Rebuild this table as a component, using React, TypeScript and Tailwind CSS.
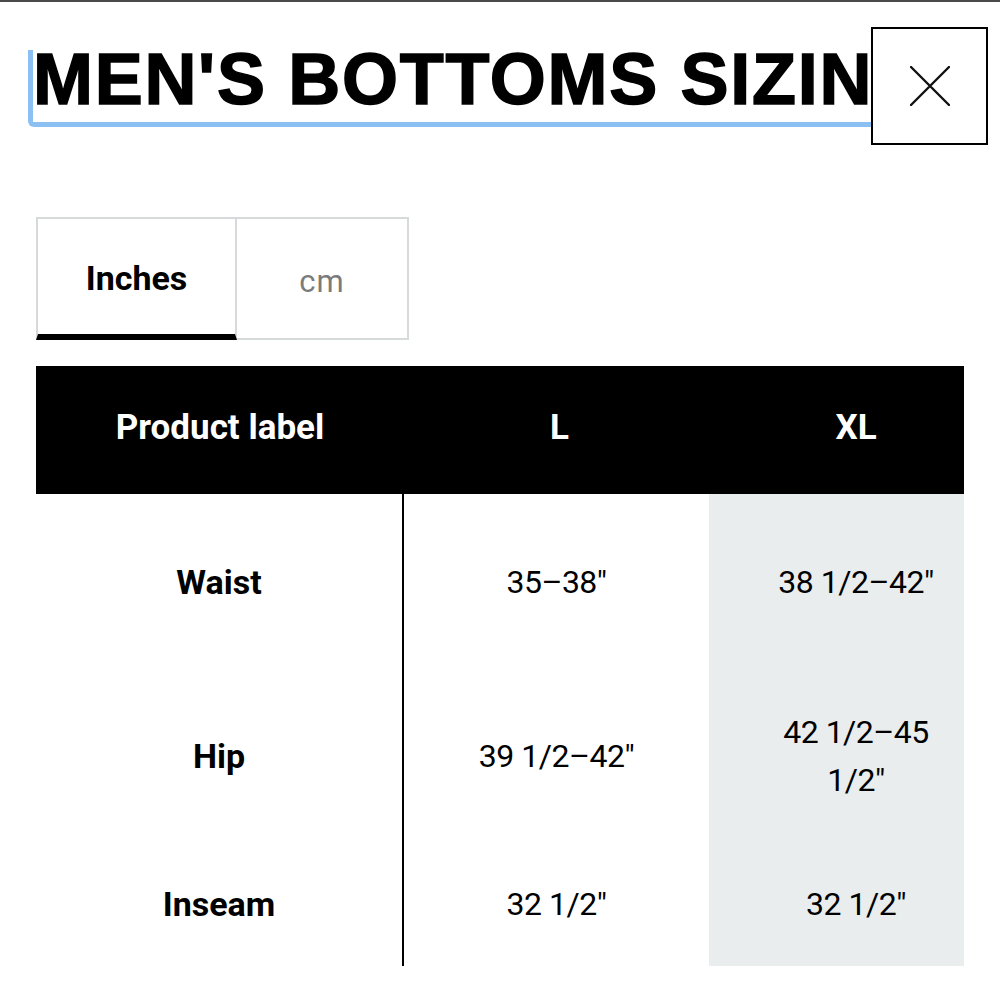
import React from "react";

const rows = [
  { label: "Waist", l: "35–38\"", xl: "38 1/2–42\"", h: "h-[176px]" },
  { label: "Hip", l: "39 1/2–42\"", xl: "42 1/2–45 1/2\"", h: "h-[172px]" },
  { label: "Inseam", l: "32 1/2\"", xl: "32 1/2\"", h: "h-[124px]" },
];

const CloseIcon = () => (
  <svg width="40" height="40" viewBox="0 0 40 40" fill="none">
    <path d="M1 1L39 39M39 1L1 39" stroke="#111" strokeWidth="2.4" strokeLinecap="round" />
  </svg>
);

const App = () => {
  return (
    <div className="w-[1000px] h-[1000px] bg-white border-t-2 border-[#4a4a4a] overflow-hidden font-['Roboto',sans-serif] text-black">
      {/* heading row */}
      <div className="flex items-start pl-[28px]">
        <div className="mt-[48px] w-[843px] overflow-hidden border-l-[5px] border-b-[5px] border-[#8dc0f2] rounded-bl-[6px] pb-[13px]">
          <h1 className="whitespace-nowrap font-['Liberation_Sans',Arial,sans-serif] font-bold text-[72px] leading-[59px] tracking-[1.7px] [-webkit-text-stroke:1.5px_black]">
            MEN'S BOTTOMS SIZING
          </h1>
        </div>
        <button className="mt-[25px] w-[117px] h-[118px] border-2 border-black bg-white flex items-center justify-center shrink-0">
          <CloseIcon />
        </button>
      </div>

      {/* unit tabs */}
      <div className="flex ml-[36px] mt-[72px]">
        <div className="w-[201px] h-[123px] border-t-2 border-l-2 border-r-2 border-[#d6dada] border-b-[6px] border-b-black flex items-center justify-center pt-[4px]">
          <span className="text-[34px] font-bold">Inches</span>
        </div>
        <div className="w-[172px] h-[123px] border-2 border-l-0 border-[#d6dada] flex items-center justify-center pt-[8px]">
          <span className="text-[31px] text-[#7b7b7b] tracking-[1px]">cm</span>
        </div>
      </div>

      {/* size table */}
      <div className="ml-[36px] mt-[26px] w-[928px] overflow-hidden">
        <div className="w-[967px]">
          <div className="grid grid-cols-[368px_305px_294px] h-[128px] bg-black text-white font-bold text-[35px]">
            <div className="flex items-center justify-center pb-[4px]">Product label</div>
            <div className="flex items-center justify-center pb-[4px] pl-[6px]">L</div>
            <div className="flex items-center justify-center pb-[4px]">XL</div>
          </div>
          {rows.map((r) => (
            <div key={r.label} className={`grid grid-cols-[368px_305px_294px] ${r.h}`}>
              <div className="flex items-center justify-center border-r-2 border-black font-bold text-[34px]">
                {r.label}
              </div>
              <div className="flex items-center justify-center text-[32px] tracking-[-0.5px]">{r.l}</div>
              <div className="flex items-center justify-center bg-[#e9edee] px-[50px] text-center text-[32px] leading-[48px] tracking-[-0.5px]">
                {r.xl}
              </div>
            </div>
          ))}
        </div>
      </div>
    </div>
  );
};

export default App;
